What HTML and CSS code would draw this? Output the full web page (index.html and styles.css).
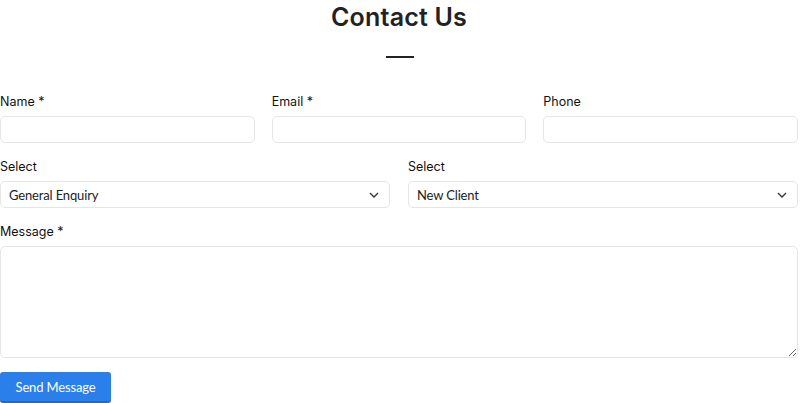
FILE: index.html
```html
<!DOCTYPE html>
<html>
<head>
<meta charset="utf-8">
<link rel="stylesheet" href="styles.css">
</head>
<body>
<div class="page">
  <h1 class="title">Contact Us</h1>
  <div class="rule"></div>
  <form class="form">
    <div class="row three">
      <div class="field"><label>Name *</label><input type="text"></div>
      <div class="field"><label>Email *</label><input type="email"></div>
      <div class="field"><label>Phone</label><input type="tel"></div>
    </div>
    <div class="row two">
      <div class="field"><label>Select</label>
        <div class="select"><span>General Enquiry</span>
          <svg width="10" height="6" viewBox="0 0 10 6"><path d="M1 1l4 4 4-4" fill="none" stroke="#333" stroke-width="1.3"/></svg>
        </div>
      </div>
      <div class="field"><label>Select</label>
        <div class="select"><span>New Client</span>
          <svg width="10" height="6" viewBox="0 0 10 6"><path d="M1 1l4 4 4-4" fill="none" stroke="#333" stroke-width="1.3"/></svg>
        </div>
      </div>
    </div>
    <div class="field"><label>Message *</label><textarea></textarea></div>
    <div class="actions"><button type="button" class="btn">Send Message</button></div>
  </form>
</div>
</body>
</html>
```
FILE: styles.css
```css
* { box-sizing: border-box; }
html, body { margin: 0; padding: 0; background: #fff; }
body { font-family: "Inter", "Noto Sans", sans-serif; color: #222; }
.page { width: 798px; }
.title {
  margin: 0;
  padding-top: 2px;
  text-align: center;
  font-family: "Inter", sans-serif;
  font-weight: 600;
  font-size: 25px;
  line-height: 30px;
  letter-spacing: 0.2px;
  color: #222;
}
.rule {
  width: 28px;
  height: 2px;
  background: #222;
  margin: 24px auto 0 386px;
}
.form { margin-top: 36px; display: flex; flex-direction: column; gap: 16px; }
.row { display: grid; gap: 17px; }
.row.three { grid-template-columns: 1fr 1fr 1fr; }
.row.two { grid-template-columns: 1fr 1fr; gap: 18px; }
.field { display: flex; flex-direction: column; }
.field label {
  font-family: "Inter", sans-serif;
  font-size: 12.5px;
  line-height: 15px;
  color: #111;
  margin-bottom: 7px;
  font-weight: 400;
}
input, textarea {
  border: 1px solid #e6e6e6;
  border-radius: 5px;
  height: 27px;
  padding: 0;
  font: inherit;
  outline: none;
}
.select {
  height: 27px;
  border: 1px solid #e6e6e6;
  border-radius: 5px;
  display: flex;
  align-items: center;
  justify-content: space-between;
  padding: 0 10px 0 8px;
  font-family: "Lato", sans-serif;
  font-size: 13px;
  letter-spacing: -0.15px;
  color: #222;
}
textarea { height: 112px; resize: vertical; }
.actions { margin-top: -2px; }
.btn {
  background: #2a7fea;
  color: #fff;
  border: none;
  border-bottom: 2px solid #1e6bd0;
  border-radius: 3px;
  height: 31px;
  width: 111px;
  font-family: "Lato", sans-serif;
  font-size: 13px;
  letter-spacing: -0.15px;
  padding: 0;
}
```
